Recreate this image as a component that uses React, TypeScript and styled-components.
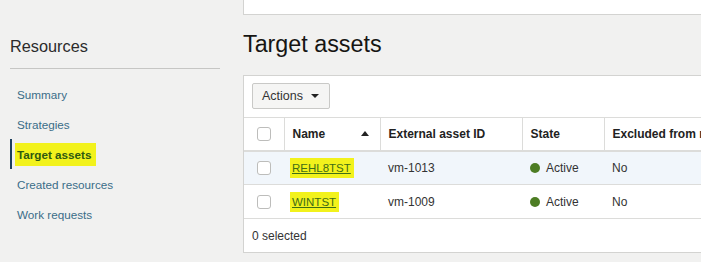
import React from "react";
import styled, { createGlobalStyle } from "styled-components";

const Global = createGlobalStyle`
  html, body { margin: 0; padding: 0; }
  body {
    background: #f1f1f0;
    font-family: "Liberation Sans", Arial, sans-serif;
    color: #161513;
    width: 701px;
    height: 262px;
    overflow: hidden;
  }
`;

const Page = styled.div`
  display: grid;
  grid-template-columns: 243px 1fr;
  height: 262px;
  overflow: hidden;
`;

const Sidebar = styled.nav`
  padding: 36px 23px 0 9px;
  display: flex;
  flex-direction: column;
`;

const SideTitle = styled.h2`
  margin: 0 0 0 1px;
  font-size: 16.3px;
  font-weight: 400;
  line-height: 20px;
  color: #2b2b2b;
  padding-bottom: 12px;
  border-bottom: 1px solid #c6c6c4;
`;

const NavList = styled.ul`
  list-style: none;
  margin: 10px 0 0 1px;
  padding: 0;
`;

const NavItem = styled.li<{ $active?: boolean }>`
  height: 30px;
  display: flex;
  align-items: center;
  padding-left: ${(p) => (p.$active ? "5px" : "7px")};
  border-left: ${(p) => (p.$active ? "2px solid #1d3f5e" : "0")};
  font-size: 11.7px;
  color: ${(p) => (p.$active ? "#2f5a10" : "#3a6d88")};
  font-weight: ${(p) => (p.$active ? 700 : 400)};
`;

const Marker = styled.span`
  background: #f2f21c;
  padding: 5px 4px 5px 2px;
  margin-left: -2px;
`;

const StatusTitle = styled.div`
  margin: 30px 0 0 1px;
  font-size: 16.3px;
  color: #2b2b2b;
`;

const Main = styled.main`
  display: flex;
  flex-direction: column;
`;

const TopPanel = styled.div`
  height: 14px;
  background: #fff;
  border: 1px solid #d3d3d1;
  border-top: 0;
  border-right: 0;
`;

const Heading = styled.h1`
  margin: 0;
  height: 60px;
  box-sizing: border-box;
  padding-top: 16px;
  font-size: 23.3px;
  font-weight: 400;
  line-height: 27px;
  color: #161513;
`;

const TablePanel = styled.section`
  background: #fff;
  border: 1px solid #d3d3d1;
  border-right: 0;
  height: 178px;
  box-sizing: border-box;
`;

const Toolbar = styled.div`
  padding: 7px 8px 8px;
  display: flex;
`;

const ActionsButton = styled.button`
  height: 26px;
  width: 78px;
  box-sizing: border-box;
  border: 1px solid #c9c9c7;
  border-radius: 2px;
  background: #f5f5f4;
  font-family: inherit;
  font-size: 12.5px;
  color: #333;
  display: flex;
  align-items: center;
  gap: 8px;
  padding: 0 9px;
`;

const Caret = styled.span`
  width: 0;
  height: 0;
  border-left: 4px solid transparent;
  border-right: 4px solid transparent;
  border-top: 4px solid #222;
`;

const Table = styled.table`
  border-collapse: collapse;
  width: 100%;
  table-layout: fixed;
  font-size: 12px;
`;

const HeadCell = styled.th<{ $w?: number }>`
  ${(p) => (p.$w ? `width: ${p.$w}px;` : "")}
  height: 33px;
  box-sizing: border-box;
  text-align: left;
  font-weight: 700;
  color: #222;
  padding: 0 8px;
  border-top: 1px solid #dcdcda;
  border-bottom: 2px solid #dcdcda;
  border-left: 1px solid #dcdcda;
  white-space: nowrap;
  overflow: hidden;
  &:first-child { border-left: 0; }
`;

const NameHead = styled.div`
  display: flex;
  justify-content: space-between;
  align-items: center;
  padding-right: 3px;
`;

const SortUp = styled.span`
  width: 0;
  height: 0;
  border-left: 4px solid transparent;
  border-right: 4px solid transparent;
  border-bottom: 5px solid #222;
`;

const Row = styled.tr<{ $hover?: boolean }>`
  background: ${(p) => (p.$hover ? "#f1f6fb" : "#fff")};
`;

const Cell = styled.td`
  height: 34px;
  box-sizing: border-box;
  padding: 0 8px;
  border-bottom: 1px solid #dcdcda;
  color: #333;
  white-space: nowrap;
  overflow: hidden;
`;

const CheckCell = styled.td`
  height: 34px;
  box-sizing: border-box;
  padding: 0 0 0 13px;
  border-bottom: 1px solid #dcdcda;
`;

const HeadCheckCell = styled(HeadCell)`
  padding: 0 0 0 13px;
`;

const Check = styled.span`
  display: block;
  width: 14px;
  height: 14px;
  box-sizing: border-box;
  border: 1px solid #bdbdbb;
  border-radius: 3px;
  background: #fff;
`;

const NameLink = styled.a`
  color: #3f6e16;
  font-size: 11.5px;
  text-decoration: underline;
  background: #f2f21c;
  padding: 4px 3px 4px 2px;
  margin-left: -2px;
`;

const Dot = styled.span`
  display: inline-block;
  width: 10px;
  height: 10px;
  border-radius: 50%;
  background: #4d7d24;
  margin-right: 6px;
  vertical-align: -1px;
`;

const Footer = styled.div`
  height: 34px;
  display: flex;
  align-items: center;
  padding-left: 8px;
  font-size: 12px;
  color: #333;
`;

const rows = [
  { name: "REHL8TST", id: "vm-1013", hover: true },
  { name: "WINTST", id: "vm-1009", hover: false },
];

export default function App() {
  return (
    <>
      <Global />
      <Page>
        <Sidebar>
          <SideTitle>Resources</SideTitle>
          <NavList>
            <NavItem>Summary</NavItem>
            <NavItem>Strategies</NavItem>
            <NavItem $active>
              <Marker>Target assets</Marker>
            </NavItem>
            <NavItem>Created resources</NavItem>
            <NavItem>Work requests</NavItem>
          </NavList>
          <StatusTitle>Status</StatusTitle>
        </Sidebar>
        <Main>
          <TopPanel />
          <Heading>Target assets</Heading>
          <TablePanel>
            <Toolbar>
              <ActionsButton>
                Actions <Caret />
              </ActionsButton>
            </Toolbar>
            <Table>
              <thead>
                <tr>
                  <HeadCheckCell $w={40}>
                    <Check />
                  </HeadCheckCell>
                  <HeadCell $w={96}>
                    <NameHead>
                      Name <SortUp />
                    </NameHead>
                  </HeadCell>
                  <HeadCell $w={142}>External asset ID</HeadCell>
                  <HeadCell $w={82}>State</HeadCell>
                  <HeadCell>Excluded from migration</HeadCell>
                </tr>
              </thead>
              <tbody>
                {rows.map((r) => (
                  <Row key={r.name} $hover={r.hover}>
                    <CheckCell>
                      <Check />
                    </CheckCell>
                    <Cell>
                      <NameLink>{r.name}</NameLink>
                    </Cell>
                    <Cell>{r.id}</Cell>
                    <Cell>
                      <Dot />
                      Active
                    </Cell>
                    <Cell>No</Cell>
                  </Row>
                ))}
              </tbody>
            </Table>
            <Footer>0 selected</Footer>
          </TablePanel>
        </Main>
      </Page>
    </>
  );
}
